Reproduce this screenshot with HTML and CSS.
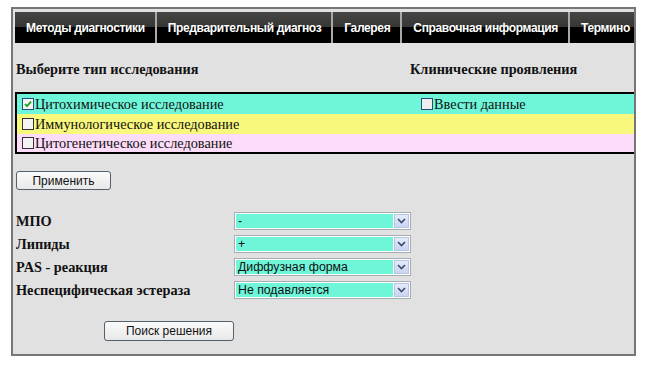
FILE: index.html
```html
<!DOCTYPE html>
<html lang="ru">
<head>
<meta charset="utf-8">
<link rel="stylesheet" href="styles.css">
</head>
<body>
<div class="frame">
  <nav class="nav">
    <span class="nav-item">Методы диагностики</span>
    <span class="nav-item">Предварительный диагноз</span>
    <span class="nav-item">Галерея</span>
    <span class="nav-item">Справочная информация</span>
    <span class="nav-item">Термино</span>
  </nav>

  <div class="heads">
    <div class="head-left">Выберите тип исследования</div>
    <div class="head-right">Клинические проявления</div>
  </div>

  <div class="types">
    <div class="row row-cyan">
      <label class="cell-left"><span class="cb checked"><svg viewBox="0 0 12 12" width="12" height="12"><rect x="0.5" y="0.5" width="11" height="11" fill="#f4f4f4" stroke="#1f4f7a"/><path d="M3 6 L5 8.2 L9 3.6" fill="none" stroke="#1aa61a" stroke-width="1.8"/></svg></span>Цитохимическое исследование</label>
      <label class="cell-right"><span class="cb"><svg viewBox="0 0 12 12" width="12" height="12"><rect x="0.5" y="0.5" width="11" height="11" fill="#eeeeee" stroke="#1f4f7a"/></svg></span>Ввести данные</label>
    </div>
    <div class="row row-yellow">
      <label class="cell-left"><span class="cb"><svg viewBox="0 0 12 12" width="12" height="12"><rect x="0.5" y="0.5" width="11" height="11" fill="#f4f4f4" stroke="#333"/></svg></span>Иммунологическое исследование</label>
    </div>
    <div class="row row-pink">
      <label class="cell-left"><span class="cb"><svg viewBox="0 0 12 12" width="12" height="12"><rect x="0.5" y="0.5" width="11" height="11" fill="#f4f4f4" stroke="#333"/></svg></span>Цитогенетическое исследование</label>
    </div>
  </div>

  <button class="btn btn-apply">Применить</button>

  <div class="form">
    <div class="frow">
      <span class="flabel">МПО</span>
      <div class="sel"><span class="sel-val">-</span><span class="sel-arrow"><svg viewBox="0 0 9 6" width="9" height="6"><path d="M1 1 L4.5 4.5 L8 1" fill="none" stroke="#3b4a6b" stroke-width="1.6"/></svg></span></div>
    </div>
    <div class="frow">
      <span class="flabel">Липиды</span>
      <div class="sel"><span class="sel-val">+</span><span class="sel-arrow"><svg viewBox="0 0 9 6" width="9" height="6"><path d="M1 1 L4.5 4.5 L8 1" fill="none" stroke="#3b4a6b" stroke-width="1.6"/></svg></span></div>
    </div>
    <div class="frow">
      <span class="flabel">PAS - реакция</span>
      <div class="sel"><span class="sel-val">Диффузная форма</span><span class="sel-arrow"><svg viewBox="0 0 9 6" width="9" height="6"><path d="M1 1 L4.5 4.5 L8 1" fill="none" stroke="#3b4a6b" stroke-width="1.6"/></svg></span></div>
    </div>
    <div class="frow">
      <span class="flabel">Неспецифическая эстераза</span>
      <div class="sel"><span class="sel-val">Не подавляется</span><span class="sel-arrow"><svg viewBox="0 0 9 6" width="9" height="6"><path d="M1 1 L4.5 4.5 L8 1" fill="none" stroke="#3b4a6b" stroke-width="1.6"/></svg></span></div>
    </div>
  </div>

  <button class="btn btn-search">Поиск решения</button>
</div>
</body>
</html>
```

FILE: styles.css
```css
* { box-sizing: border-box; }
body {
  margin: 0;
  background: #ffffff;
  font-family: "Liberation Serif", "Times New Roman", serif;
}
.frame {
  margin: 7px 0 0 11px;
  width: 625px;
  height: 349px;
  border: 2px solid #767676;
  background: #e1e1e1;
  overflow: hidden;
  padding: 3px 0 0 2px;
}
.nav {
  display: flex;
  height: 31px;
  width: 621px;
  overflow: hidden;
  background: linear-gradient(#454543 0, #363634 50%, #000 50%, #000 100%);
  white-space: nowrap;
}
.nav-item {
  display: flex;
  align-items: center;
  flex: none;
  padding: 1px 10px 0 11px;
  color: #ffffff;
  font: bold 12px "Liberation Sans", Arial, sans-serif;
  letter-spacing: -0.35px;
  border-right: 2px solid #a9a9a9;
}
.nav-item:last-child { border-right: 0; }
.heads {
  display: flex;
  margin-top: 18px;
  height: 17px;
  font-weight: bold;
  font-size: 14.3px;
  color: #111;
}
.head-left { width: 395px; padding-left: 1px; }
.types {
  margin-top: 14px;
  width: 640px;
  border: 2px solid #000;
}
.row {
  display: flex;
  height: 20px;
  align-items: center;
  font-size: 14.3px;
  color: #111;
}
.row-cyan { background: #6ff6d9; }
.row-yellow { background: #f8f87c; }
.row-pink { background: #fcdcf8; height: 18px; }
.cell-left { display: flex; align-items: center; width: 404px; padding-left: 5px; }
.cell-right { display: flex; align-items: center; }
.cb { display: inline-flex; margin-right: 1px; }
.cb svg { display: block; }
.btn {
  display: block;
  font: 12px "Liberation Sans", Arial, sans-serif;
  color: #111;
  background: linear-gradient(#fbfbfb, #e8e8e8);
  border: 1px solid #55606e;
  border-radius: 3px;
  padding: 0;
}
.btn-apply {
  margin: 17px 0 0 1px;
  width: 95px;
  height: 19px;
}
.form {
  margin-top: 22px;
  display: flex;
  flex-direction: column;
  gap: 5px;
}
.frow {
  display: flex;
  align-items: center;
  height: 18px;
}
.flabel {
  width: 219px;
  padding-left: 1px;
  font-weight: bold;
  font-size: 14.3px;
  color: #111;
}
.sel {
  display: flex;
  width: 177px;
  height: 18px;
  border: 1px solid #a7adb5;
  background: #ffffff;
  padding: 1px;
}
.sel-val {
  flex: 1;
  background: #6ff6d9;
  font: 12.3px "Liberation Sans", Arial, sans-serif;
  line-height: 14px;
  padding-left: 2px;
  color: #111;
}
.sel-arrow {
  width: 15px;
  display: flex;
  align-items: center;
  justify-content: center;
  background: linear-gradient(#e4ebf9, #c9d5f2);
  border: 1px solid #b7c5e4;
  margin-left: 1px;
}
.sel-arrow svg { display: block; }
.btn-search {
  margin: 22px 0 0 89px;
  width: 130px;
  height: 20px;
}
```
